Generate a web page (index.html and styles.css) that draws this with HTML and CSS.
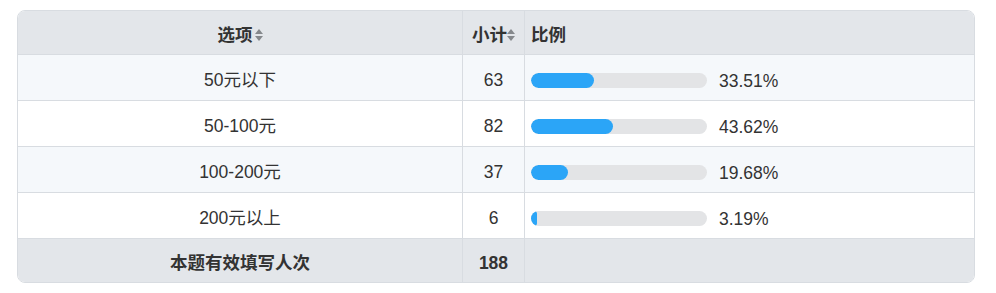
FILE: index.html
```html
<!DOCTYPE html>
<html lang="zh">
<head>
<meta charset="utf-8">
<link rel="stylesheet" href="styles.css">
</head>
<body>
<div class="wrap">
<table class="stat">
  <thead>
    <tr>
      <th class="c-opt">选项<span class="sort"><i class="up"></i><i class="dn"></i></span></th>
      <th class="c-cnt">小计<span class="sort"><i class="up"></i><i class="dn"></i></span></th>
      <th class="c-pct">比例</th>
    </tr>
  </thead>
  <tbody>
    <tr class="odd">
      <td class="c-opt">50元以下</td>
      <td class="c-cnt">63</td>
      <td class="c-pct"><div class="pct"><div class="bar"><div class="fill" style="width:63px"></div></div><span class="num">33.51%</span></div></td>
    </tr>
    <tr>
      <td class="c-opt">50-100元</td>
      <td class="c-cnt">82</td>
      <td class="c-pct"><div class="pct"><div class="bar"><div class="fill" style="width:82px"></div></div><span class="num">43.62%</span></div></td>
    </tr>
    <tr class="odd">
      <td class="c-opt">100-200元</td>
      <td class="c-cnt">37</td>
      <td class="c-pct"><div class="pct"><div class="bar"><div class="fill" style="width:37px"></div></div><span class="num">19.68%</span></div></td>
    </tr>
    <tr>
      <td class="c-opt">200元以上</td>
      <td class="c-cnt">6</td>
      <td class="c-pct"><div class="pct"><div class="bar"><div class="fill" style="width:6px"></div></div><span class="num">3.19%</span></div></td>
    </tr>
  </tbody>
  <tfoot>
    <tr>
      <td class="c-opt">本题有效填写人次</td>
      <td class="c-cnt">188</td>
      <td class="c-pct"></td>
    </tr>
  </tfoot>
</table>
</div>
</body>
</html>
```
FILE: styles.css
```css
html, body { margin: 0; padding: 0; background: #fff; }
body {
  font-family: "Liberation Sans", Arial, "Noto Sans CJK SC", sans-serif;
  font-size: 17.5px;
  color: #333;
}
.wrap { padding: 10px 21px 0 17px; }
.stat {
  width: 958px;
  border-collapse: separate;
  border-spacing: 0;
  border: 1px solid #d8dce1;
  border-radius: 8px;
  overflow: hidden;
  table-layout: fixed;
}
.stat th, .stat td {
  padding: 4px 0 0 0;
  border-right: 1px solid #d8dce1;
  border-bottom: 1px solid #d8dce1;
  vertical-align: middle;
  line-height: 20px;
}
.stat th:last-child, .stat td:last-child { border-right: none; }
.stat tfoot td { border-bottom: none; }
.c-opt { width: 444px; text-align: center; }
.c-cnt { width: 61px; text-align: center; }
.c-pct { text-align: left; padding-left: 6px !important; }
thead th {
  height: 39px;
  background: #e3e6ea;
  font-weight: bold;
  color: #333;
}
tbody td { height: 41px; background: #fff; }
tbody tr.odd td { background: #f5f8fb; }
tfoot td { height: 39px; background: #e3e6ea; font-weight: bold; }
.sort {
  display: inline-flex;
  flex-direction: column;
  gap: 2px;
  vertical-align: middle;
  margin-left: 2px;
  position: relative;
  top: -1px;
}
.sort i { display: block; width: 0; height: 0; border-left: 4px solid transparent; border-right: 4px solid transparent; }
.sort .up { border-bottom: 5px solid #85888c; }
.sort .dn { border-top: 5px solid #85888c; }
.c-cnt .sort { margin-left: 0; }
.pct { display: flex; align-items: center; padding-top: 1px; }
.bar {
  width: 176px;
  height: 15px;
  background: #e3e4e6;
  border-radius: 8px;
  overflow: hidden;
}
.fill { height: 100%; background: #2ba5f7; border-radius: 8px; }
.num { margin-left: 12px; padding-top: 1px; }
```
